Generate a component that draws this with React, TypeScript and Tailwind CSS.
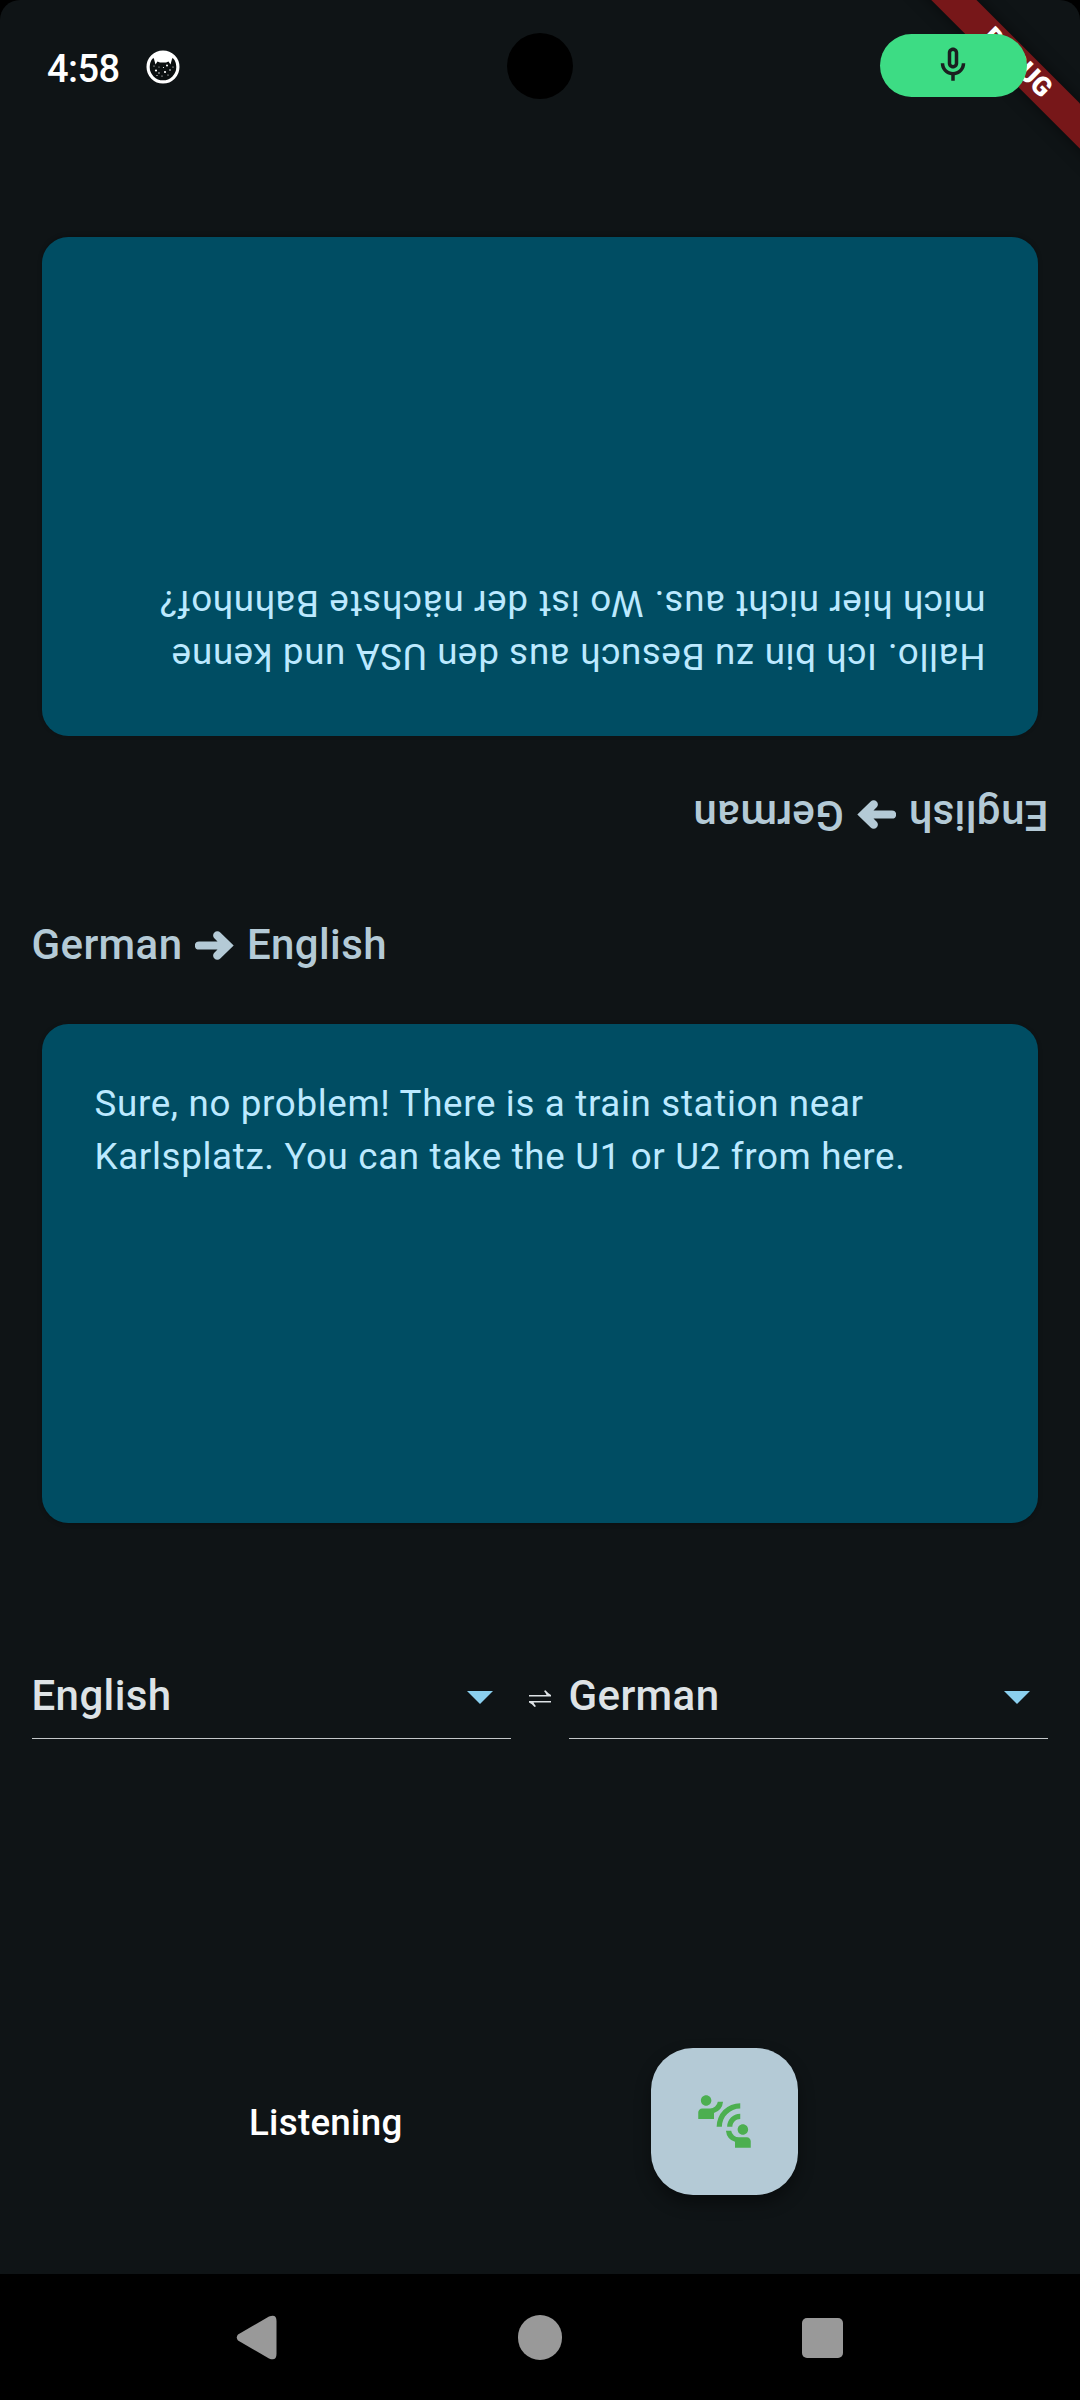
import { MdConnectWithoutContact } from "react-icons/md";

function StatusBar() {
  return (
    <header className="relative flex h-[134px] w-full shrink-0 items-start">
      <span className="ml-[47px] mt-[47px] w-[99px] text-[38px] leading-[44px] font-medium tracking-[-0.600px] text-white">4:58</span>
      <svg className="mt-[50px] h-[34px] w-[34px]" viewBox="0 0 34 34">
        <circle cx="17" cy="17" r="14.9" fill="#0b0f10" stroke="#fff" strokeWidth="3.200" />
        <path d="M6 6Q17-2 28 6L26 9L24.500 14.500L22.500 11.500L20 12.500H14L11.500 11.500L9.500 14.500L8 9Z" fill="#fff" />
        <g fill="#fff">
          <circle cx="10" cy="20.500" r="1.100" /><circle cx="21" cy="15.500" r="1" /><circle cx="19" cy="22" r="1.100" />
          <circle cx="13" cy="23" r=".7" /><circle cx="17.500" cy="17.500" r=".6" /><circle cx="24" cy="20" r=".8" />
          <circle cx="16" cy="26" r=".6" /><circle cx="22" cy="25" r=".6" /><circle cx="8" cy="16" r=".6" />
          <circle cx="27" cy="17" r=".6" /><circle cx="13" cy="17" r=".5" /><circle cx="11" cy="25.500" r=".6" />
        </g>
      </svg>
      <div className="absolute left-[507px] top-[33px] h-[66px] w-[66px] rounded-full bg-black" />
      <div className="absolute right-0 top-0 h-[200px] w-[200px] overflow-hidden">
        <div className="absolute left-[6.900px] top-[47.350px] flex h-[31.500px] w-[260px] rotate-45 items-center justify-center bg-[#771719] shadow-[0_0_16px_rgba(0,0,0,0.5)]">
          <span className="text-[26.775px] leading-none font-black text-white">DEBUG</span>
        </div>
      </div>
      <div className="absolute left-[880px] top-[34px] flex h-[63px] w-[147px] items-center justify-center rounded-full bg-[#3ddc84]">
        <svg className="mr-px mb-px h-[42px] w-[42px]" viewBox="0 0 24 24" fill="#1b1f20">
          <path d="M12 14c1.660 0 3-1.340 3-3V5c0-1.660-1.340-3-3-3S9 3.340 9 5v6c0 1.660 1.340 3 3 3zm-1-9c0-.55.45-1 1-1s1 .45 1 1v6c0 .55-.45 1-1 1s-1-.45-1-1V5zm6 6c0 2.760-2.240 5-5 5s-5-2.240-5-5H5c0 3.530 2.610 6.430 6 6.920V21h2v-3.080c3.390-.49 6-3.390 6-6.920h-2z" />
        </svg>
      </div>
    </header>
  );
}

function Direction({ from, to }: { from: string; to: string }) {
  return (
    <h2 className="ml-[31.500px] text-[42px] leading-[63px] font-medium tracking-[0.390px] whitespace-pre text-[#b4cad6]">
      {from}{" "}
      <svg className="mr-[1.800px] ml-[2px] inline-block h-[29px] w-[39px] align-[-1px]" viewBox="0 0 39 29" fill="currentColor">
        <path d="M4 10.400H22.500L19.300 7.300A4.150 4.150 0 0 1 25.300 1.500L38.700 14.500L25.300 27.500A4.150 4.150 0 0 1 19.300 21.700L22.500 18.600H4A4.100 4.100 0 0 1 4 10.400Z" />
      </svg>
      {" "}{to}
    </h2>
  );
}

function Card({ lines }: { lines: string[] }) {
  return (
    <div className="mx-[42px] h-[498.750px] rounded-[26.250px] bg-[#004d63] p-[52.500px] shadow-[0_1px_4px_rgba(0,0,0,0.25)]">
      <p className="text-[36.750px] leading-[53px] tracking-[0.656px] whitespace-nowrap text-[#bce9ff]">
        {lines.map((line) => (
          <span key={line} className="block">{line}</span>
        ))}
      </p>
    </div>
  );
}

function LanguageSelect({ value }: { value: string }) {
  return (
    <div className="flex h-[76px] w-[479.500px] items-start justify-between border-b border-[#c3c7c9] pr-[18px]">
      <span className="mt-px text-[42px] leading-[63px] font-medium tracking-[0.390px] text-[#dee3e6]">{value}</span>
      <svg className="mt-[28px] h-[13px] w-[26px]" viewBox="0 0 26 13">
        <path d="M0 0H26L13 13Z" fill="#8bd0ef" />
      </svg>
    </div>
  );
}

export default function App() {
  return (
    <div className="h-[2400px] w-[1080px] bg-black font-[Roboto,sans-serif]">
      <div className="flex h-full flex-col overflow-hidden rounded-t-[20px] bg-[#0f1416]">
        <StatusBar />
        <section className="mt-[103px] rotate-180">
          <div className="mb-[48.250px]">
            <Direction from="English" to="German" />
          </div>
          <Card lines={["Hallo. Ich bin zu Besuch aus den USA und kenne", "mich hier nicht aus. Wo ist der nächste Bahnhof?"]} />
        </section>
        <section className="mt-[66px]">
          <div className="mb-[48.250px]">
            <Direction from="German" to="English" />
          </div>
          <Card lines={["Sure, no problem! There is a train station near", "Karlsplatz. You can take the U1 or U2 from here."]} />
        </section>
        <div className="mt-[140px] flex justify-between pr-[32px] pl-[31.500px]">
          <LanguageSelect value="English" />
          <svg className="mt-[27px] h-[17px] w-[22px]" viewBox="0 0 22 17" fill="#dee3e6">
            <path d="M0 5H17.500Q16.800 3 15 1L16.500 .3Q19 3.500 22 5V6.500H0ZM22 12.500H4.500Q5.200 14.200 7 16.200L5.500 17Q3 13.700 0 12.500V11H22Z" />
          </svg>
          <LanguageSelect value="German" />
        </div>
        <div className="mt-[309px] flex items-center">
          <span className="mt-[3px] ml-[249px] w-[402px] text-[36.750px] leading-[52.500px] font-medium tracking-[0.260px] text-white">Listening</span>
          <button className="flex h-[147px] w-[147px] items-center justify-center rounded-[42px] bg-[#b4cad6] text-[#4caf50] shadow-[0_8px_16px_rgba(0,0,0,0.4)]">
            <MdConnectWithoutContact className="h-[63px] w-[63px]" />
          </button>
        </div>
        <nav className="mt-auto flex h-[126px] shrink-0 items-start bg-black">
          <svg className="ml-[236px] mt-[41px] h-[45px] w-[41px]" viewBox="0 0 41 45" fill="#999">
            <path d="M2 19.500L33 1.500Q40.500-1.500 40.500 6V39Q40.500 46.500 33 43.500L2 25.500Q-.5 22.500 2 19.500Z" />
          </svg>
          <div className="ml-[241px] mt-[41px] h-[45px] w-[44px] rounded-full bg-[#999]" />
          <div className="ml-[240px] mt-[43.500px] h-[40.500px] w-[40.500px] rounded-[5px] bg-[#999]" />
        </nav>
      </div>
    </div>
  );
}
